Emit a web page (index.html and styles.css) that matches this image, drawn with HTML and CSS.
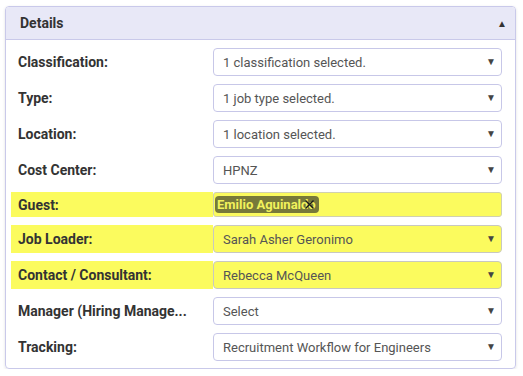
FILE: index.html
```html
<!DOCTYPE html>
<html lang="en">

<head>
    <meta charset="UTF-8">
    <meta name="viewport" content="width=device-width, initial-scale=1.0">
    <title>Details</title>
    <link rel="stylesheet" href="styles.css">
</head>

<body>
    <div class="panel">
        <div class="panel-header">
            <span class="panel-title">Details</span>
            <span class="panel-toggle">&#9650;</span>
        </div>
        <div class="panel-body">
            <div class="form-row">
                <label class="field-label">Classification:</label>
                <div class="select-box">1 classification selected.<span class="caret">&#9660;</span></div>
            </div>
            <div class="form-row">
                <label class="field-label">Type:</label>
                <div class="select-box">1 job type selected.<span class="caret">&#9660;</span></div>
            </div>
            <div class="form-row">
                <label class="field-label">Location:</label>
                <div class="select-box">1 location selected.<span class="caret">&#9660;</span></div>
            </div>
            <div class="form-row">
                <label class="field-label">Cost Center:</label>
                <div class="select-box">HPNZ<span class="caret">&#9660;</span></div>
            </div>
            <!-- highlighted rows -->
            <div class="form-row guest-row highlight">
                <label class="field-label">Guest:</label>
                <div class="tag-input">
                    <span class="tag">Emilio Aguinaldo
                        <svg class="tag-close" width="11" height="11" viewBox="0 0 11 11">
                            <path d="M1.5 1.5 L9.5 9.5 M9.5 1.5 L1.5 9.5" stroke="#1a1a1a" stroke-width="1.4" fill="none" />
                        </svg>
                    </span>
                </div>
            </div>
            <div class="form-row highlight">
                <label class="field-label">Job Loader:</label>
                <div class="select-box">Sarah Asher Geronimo<span class="caret">&#9660;</span></div>
            </div>
            <div class="form-row highlight">
                <label class="field-label">Contact / Consultant:</label>
                <div class="select-box">Rebecca McQueen<span class="caret">&#9660;</span></div>
            </div>
            <div class="form-row">
                <label class="field-label">Manager (Hiring Manage...</label>
                <div class="select-box">Select<span class="caret">&#9660;</span></div>
            </div>
            <div class="form-row">
                <label class="field-label">Tracking:</label>
                <div class="select-box">Recruitment Workflow for Engineers<span class="caret">&#9660;</span></div>
            </div>
        </div>
    </div>
</body>

</html>
```

FILE: styles.css
```css
body {
    margin: 0;
    background: #fff;
    font-family: Roboto, 'Liberation Sans', sans-serif;
    font-size: 13px;
    color: #333;
}

.panel {
    margin: 6px 0 0 5px;
    width: 509px;
    border: 1px solid #c9c9ea;
    border-radius: 4px;
    box-shadow: 0 1px 3px rgba(0, 0, 0, 0.12);
    overflow: hidden;
}

.panel-header {
    display: flex;
    align-items: center;
    justify-content: space-between;
    height: 32px;
    padding: 0 8px 0 14px;
    background: #e8e8f7;
    border-bottom: 1px solid #c9c9ea;
}

.panel-title {
    font-weight: bold;
    font-size: 14px;
    color: #333;
}

.panel-toggle {
    font-size: 10px;
    color: #333;
}

.panel-body {
    display: flex;
    flex-direction: column;
    gap: 8px;
    padding: 8px 13px 7px 5px;
}

.form-row {
    display: grid;
    grid-template-columns: 202px 289px;
    height: 28px;
}

.guest-row {
    height: 25px;
}

.field-label {
    display: flex;
    align-items: center;
    padding-left: 7px;
    font-size: 14px;
    font-weight: bold;
    color: #333;
    white-space: nowrap;
}

.highlight .field-label {
    background: #fbfb5e;
}

.select-box {
    position: relative;
    display: flex;
    align-items: center;
    padding-left: 9px;
    border: 1px solid #c7c7e8;
    border-radius: 4px;
    background: #fff;
    color: #555;
}

.highlight .select-box {
    background: #fbfb5e;
    border-color: #c8c8c0;
}

.caret {
    position: absolute;
    right: 5px;
    top: 7px;
    font-size: 10px;
    color: #444;
}

.tag-input {
    display: flex;
    align-items: center;
    padding-left: 1px;
    border: 1px solid #d0d0b0;
    border-radius: 3px;
    background: #fbfb5e;
}

.tag {
    position: relative;
    display: inline-flex;
    align-items: center;
    height: 17px;
    padding: 0 3px 0 2px;
    border-radius: 4px;
    background: #77793a;
    color: #f2f25c;
    font-size: 13px;
    font-weight: bold;
}

.tag-close {
    position: absolute;
    right: 4px;
    top: 3px;
}
```
